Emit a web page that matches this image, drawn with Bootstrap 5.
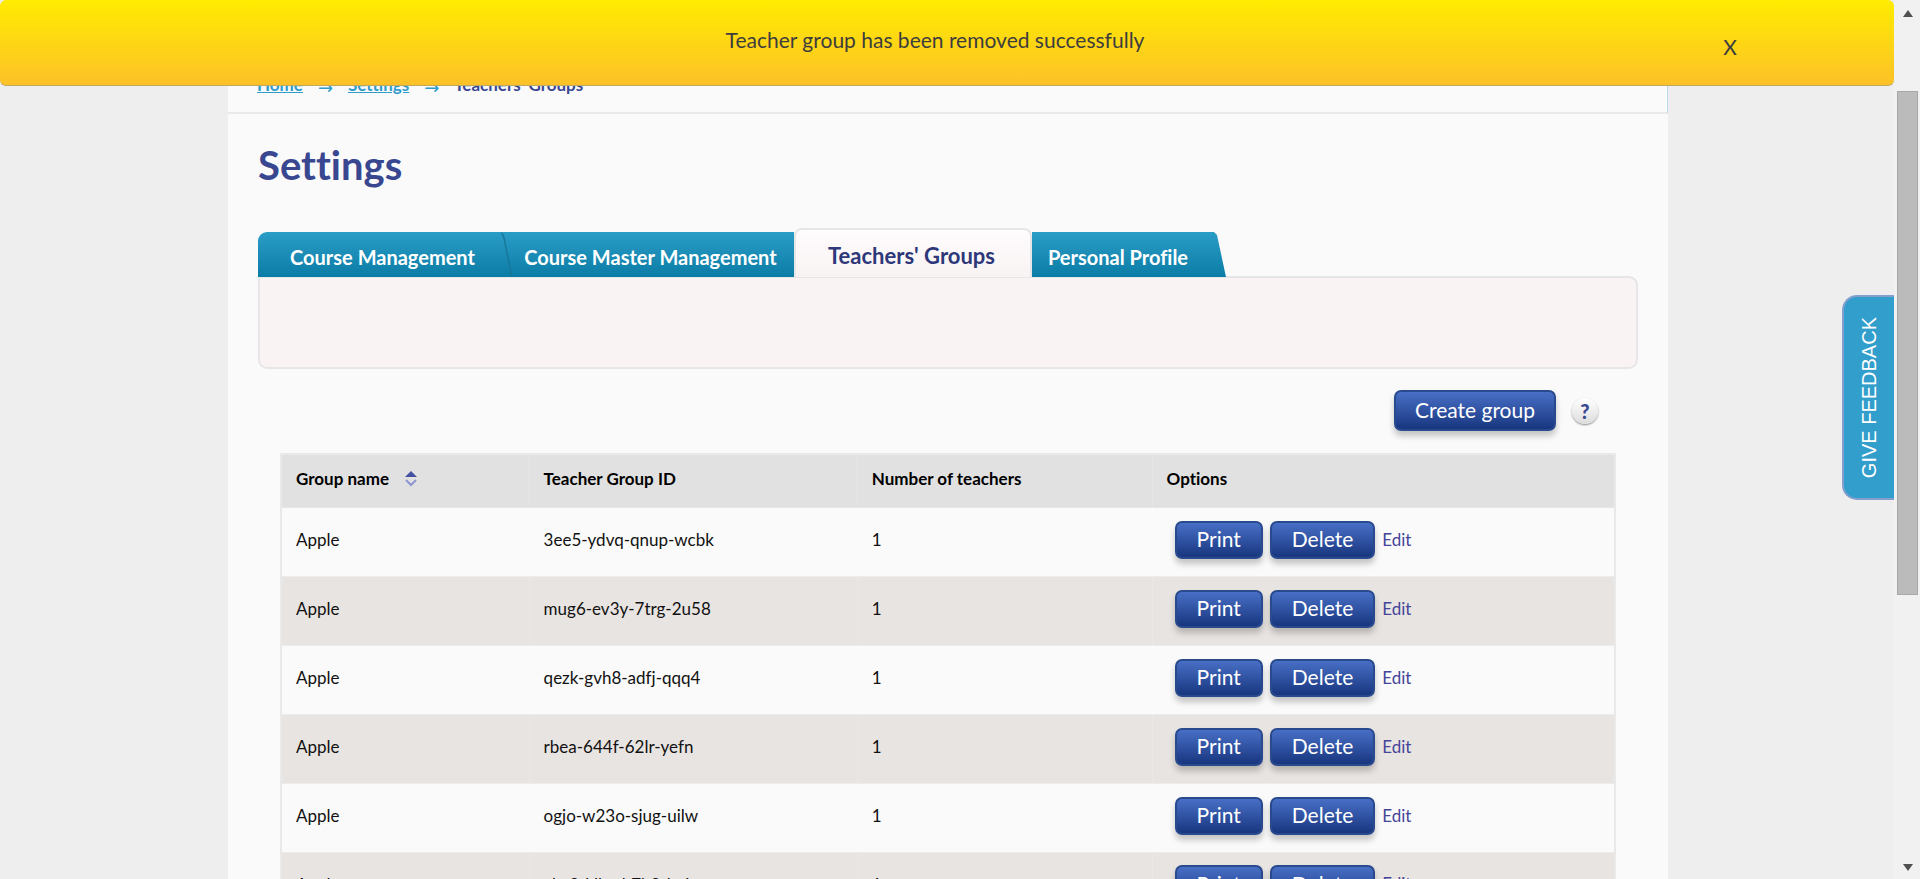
<!DOCTYPE html>
<html lang="en">
<head>
<meta charset="utf-8">
<title>Settings - Teachers' Groups</title>
<meta name="viewport" content="width=device-width, initial-scale=1">
<link href="https://cdn.jsdelivr.net/npm/bootstrap@5.3.0/dist/css/bootstrap.min.css" rel="stylesheet">
<style>
  :root { --ui: Lato, "Open Sans", sans-serif; --navy: #394791; --sky: #2f9ccb; }
  body { font-family: var(--ui); font-size: 17px; line-height: 24px; color: #111; background: #eee; font-variant-ligatures: none; }
  .viewport { height: 100vh; overflow: hidden; }
  .page-area { min-width: 0; padding-left: 2px; }
  .sheet { width: 90%; max-width: 1440px; background: #fafafa; }
  .notice { z-index: 5; height: 86px; padding-bottom: 6px; border-radius: 6px; border-bottom: 1px solid #c0a860; color: #3d3d3d; font-size: 21px;
            background: linear-gradient(#ffec00, #fdc128); }
  .notice-close { right: 157px; top: 31px; color: #3d3d3d; line-height: 32px; font-size: 21px; }
  .crumbs { height: 114px; padding: 73px 30px 0 29px; border-bottom: 2px solid #e9e9e9; border-right: 1px solid #b9dbea; font-weight: 700; color: var(--navy); }
  .crumbs a { color: var(--sky); }
  .crumbs .arrow { color: var(--sky); width: 45px; text-align: center; font-family: "DejaVu Sans", sans-serif; font-weight: 400; font-size: 18px; line-height: 30px; }
  .content { padding: 23px 30px 0; }
  h1 { font-size: 40px; line-height: 56px; font-weight: 700; color: var(--navy); margin-bottom: 35px; }
  .tab-link { height: 45px; color: #fff; font-weight: 700; font-size: 20px; text-decoration: none; background: linear-gradient(#2a9dc6, #0b7ca5); padding-top: 4px; }
  .tab-first { width: 243px; border-radius: 9px 0 0; padding-left: 6px; }
  .tab-second { width: 281px; padding-right: 6px; }
  .tab-active { width: 238px; height: 49px; padding-right: 3px; color: #2d3779; font-size: 22px; background: linear-gradient(#fffcfd, #f8f3f3); border: 2px solid #e6e6e8; border-bottom: 0; border-radius: 8px 8px 0 0; }
  .tab-last { width: 194px; padding-right: 22px; clip-path: polygon(0 0, 182px 0, 185px 3px, 100% 100%, 0 100%); }
  .tab-slant { width: 12px; height: 45px; }
  .panel { height: 93px; margin-top: -1px; background: #f9f3f3; border: 2px solid #e6e6e8; border-radius: 0 9px 9px; }
  .actions { padding: 21px 40px 0 0; margin-bottom: 22px; }
  .btn-blue { --bs-btn-color: #fff; --bs-btn-hover-color: #fff; height: 38px; padding: 0 20px 1px; border: 2px solid #2a4a8e; border-radius: 7px; font-size: 21px; line-height: 32px;
              background: linear-gradient(#486fc6, #18367f); box-shadow: 0 5px 6px rgba(0,0,0,.22); }
  .btn-tall { height: 41px; padding: 0 19px 1px; }
  .help { width: 26px; height: 26px; border: 0; border-radius: 50%; color: var(--navy); font-size: 20px; font-weight: 900; line-height: 26px; background: linear-gradient(#fff, #ddd); box-shadow: 0 1px 2px #888; }
  .groups { margin: 0 22px; }
  .grid-table { --bs-table-bg: transparent; table-layout: fixed; border: 2px solid #e9e9e9; margin: 0; color: #111; }
  .grid-table th { background: #e1e1e1; height: 53px; padding: 0 14px 4px; border: 1px solid #e6e6e6; color: #000; vertical-align: middle; }
  .grid-table td { height: 69px; padding: 0 14px 3px; border-bottom: 1px solid #ececec; border-left: 1px solid #fafafa; color: #111; }
  .grid-table tbody tr:nth-child(even) td { background: #e8e4e1; border-left-color: #eae7e5; }
  .grid-table td:last-child { padding-left: 22px; padding-bottom: 4px; }
  .grid-table a { color: #45459a; text-decoration: none; }
  .row-tools { gap: 7px; }
  .feedback { right: 0; top: 295px; width: 52px; height: 205px; border: 2px solid #829fce; border-right: 0; border-radius: 15px 0 0 15px; background: #319ecc; color: #fff; font: 20px/24px "Liberation Sans", Arial, sans-serif; }
  .feedback span { writing-mode: vertical-rl; transform: rotate(180deg); }
  .scroller { width: 26px; background: #f1f1f1; padding: 10px 2px 8px 3px; }
  .thumb { height: 504px; background: #bbb; border: 1px solid #a8a8a8; margin-top: 74px; }
</style>
</head>
<body>
<div class="viewport d-flex">
  <div class="page-area position-relative flex-grow-1">
    <div class="notice position-absolute top-0 start-0 w-100 d-flex align-items-center justify-content-center ps-0 pe-4" role="alert">
      <span>Teacher group has been removed successfully</span>
      <button type="button" class="notice-close btn p-0 border-0 position-absolute" aria-label="Close">X</button>
    </div>
    <main class="sheet mx-auto">
      <nav class="crumbs d-flex" aria-label="breadcrumb">
        <a href="#">Home</a><span class="arrow">→</span><a href="#">Settings</a><span class="arrow">→</span><span>Teachers' Groups</span>
      </nav>
      <div class="content">
        <h1>Settings</h1>
        <nav class="d-flex align-items-end position-relative">
          <a href="#" class="tab-link tab-first d-flex align-items-center justify-content-center">Course Management</a>
          <svg class="tab-slant" viewBox="0 0 12 45" aria-hidden="true"><defs><linearGradient id="tg" x2="0" y2="1"><stop stop-color="#2a9dc6"/><stop offset="1" stop-color="#0b7ca5"/></linearGradient></defs><path fill="url(#tg)" d="M0 0h12v45H0z"/><path d="M0 1q2 1 3 5l8 39" fill="none" stroke="#187799" stroke-width="1.5"/></svg>
          <a href="#" class="tab-link tab-second d-flex align-items-center justify-content-center flex-shrink-0">Course Master Management</a>
          <a href="#" class="tab-link tab-active d-flex align-items-center justify-content-center" aria-current="page">Teachers' Groups</a>
          <a href="#" class="tab-link tab-last d-flex align-items-center justify-content-center">Personal Profile</a>
        </nav>
        <div class="panel"></div>
        <div class="actions d-flex justify-content-end align-items-center gap-3">
          <button type="button" class="btn btn-blue btn-tall">Create group</button>
          <button type="button" class="help p-0" aria-label="Help">?</button>
        </div>
        <div class="groups">
          <table class="table grid-table align-middle">
            <colgroup><col style="width:18.6%"><col style="width:24.6%"><col style="width:22.1%"><col></colgroup>
            <thead><tr>
              <th scope="col"><span class="d-flex align-items-center gap-3">Group name
                <svg width="12" height="16" viewBox="0 0 12 16" aria-hidden="true"><path d="M6 0l6 6H0z" fill="#4450a0"/><path d="M1 9l5 5 5-5" fill="none" stroke="#8d97d0" stroke-width="2"/></svg></span></th>
              <th scope="col">Teacher Group ID</th><th scope="col">Number of teachers</th><th scope="col">Options</th>
            </tr></thead>
            <tbody id="rows"></tbody>
          </table>
        </div>
      </div>
    </main>
    <button type="button" class="feedback position-absolute d-flex align-items-center justify-content-center p-0"><span>GIVE FEEDBACK</span></button>
  </div>
  <div class="scroller d-flex flex-column align-items-stretch flex-shrink-0" aria-hidden="true">
    <svg class="mx-auto" width="10" height="7" viewBox="0 0 10 7"><path d="M5 0l5 7H0z" fill="#505050"/></svg>
    <div class="thumb"></div>
    <svg class="mx-auto mt-auto" width="10" height="7" viewBox="0 0 10 7"><path d="M0 0h10L5 7z" fill="#505050"/></svg>
  </div>
</div>
<script>
  const ids = ["3ee5-ydvq-qnup-wcbk", "mug6-ev3y-7trg-2u58", "qezk-gvh8-adfj-qqq4", "rbea-644f-62lr-yefn", "ogjo-w23o-sjug-uilw", "ake3-kllw-h7h3-hejx"];
  document.getElementById("rows").innerHTML = ids.map(id => `<tr><td>Apple</td><td>${id}</td><td>1</td>
    <td><div class="row-tools d-flex align-items-center"><button type="button" class="btn btn-blue">Print</button><button type="button" class="btn btn-blue">Delete</button><a href="#">Edit</a></div></td></tr>`).join("");
</script>
<script src="https://cdn.jsdelivr.net/npm/bootstrap@5.3.0/dist/js/bootstrap.bundle.min.js"></script>
</body>
</html>
